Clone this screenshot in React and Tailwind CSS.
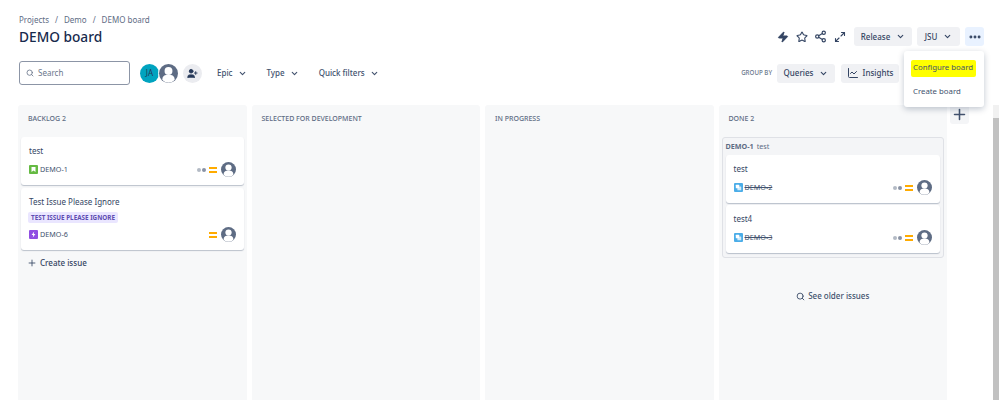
import { Search, ChevronDown, Zap, Star, Share2, Maximize2, Ellipsis, UserPlus, ChartLine, Plus } from 'lucide-react';

const UserAvatar = ({ size = 16 }) => (
  <svg width={size} height={size} viewBox="0 0 24 24" className="shrink-0">
    <circle cx="12" cy="12" r="12" fill="#5e6c84" />
    <circle cx="12" cy="8.8" r="5" fill="#fff" />
    <path d="M4.2 19.5c0-3.6 2.4-5.6 5-5.6h5.6c2.6 0 5 2 5 5.6v0.8a10.5 10.5 0 0 1-15.6 0z" fill="#fff" />
  </svg>
);

const Priority = () => (
  <div className="flex flex-col gap-[2px] w-[8px] shrink-0">
    <div className="h-[2px] bg-[#ffab00]" />
    <div className="h-[2px] bg-[#ffab00]" />
  </div>
);

const Dots = () => (
  <div className="flex gap-[1px]">
    <div className="w-[4px] h-[4px] rounded-full bg-[#b3bac5]" />
    <div className="w-[4px] h-[4px] rounded-full bg-[#8993a4]" />
  </div>
);

const FilterButton = ({ label, className }) => (
  <div className={`flex items-center gap-[5px] text-[8px] font-medium text-[#42526e] ${className}`}>
    {label}
    <ChevronDown size={9} strokeWidth={3} />
  </div>
);

const GrayButton = ({ label, className }) => (
  <div className={`h-[19px] flex items-center justify-center gap-[6px] rounded-[3px] bg-[#f0f1f4] text-[8px] font-medium text-[#344563] ${className}`}>
    {label}
    <ChevronDown size={9} strokeWidth={3} />
  </div>
);

const IssueCard = ({ title, tag, issueKey, icon, dots, done }) => (
  <div className="bg-white rounded-[3px] shadow-[0_1px_1px_rgba(9,30,66,0.25)] px-[8px] pt-[7px] pb-[8px]">
    <div className="text-[8px] leading-[14px] text-[#344563]">{title}</div>
    {tag && (
      <div className="mt-[3px] w-fit h-[11px] flex items-center px-[3px] -ml-[1px] rounded-[2px] bg-[#eae6ff] text-[6.3px] font-bold text-[#5e4db2]">
        {tag}
      </div>
    )}
    <div className="flex items-center mt-[4px]">
      {icon}
      <span className={`ml-[2px] text-[7.2px] text-[#42526e] ${done ? 'line-through' : ''}`}>{issueKey}</span>
      <div className="ml-auto flex items-center gap-[2px]">
        {dots && <div className="mr-[1px]"><Dots /></div>}
        <Priority />
        <div className="ml-[2px]">
          <UserAvatar size={15} />
        </div>
      </div>
    </div>
  </div>
);

const StoryIcon = () => (
  <svg width="9" height="9" viewBox="0 0 9 9" className="shrink-0">
    <rect width="9" height="9" rx="1" fill="#65ba43" />
    <path d="M2.5 2h4v5L4.5 5.6 2.5 7z" fill="#fff" />
  </svg>
);

const EpicIcon = () => (
  <svg width="9" height="9" viewBox="0 0 9 9" className="shrink-0">
    <rect width="9" height="9" rx="1" fill="#904ee2" />
    <path d="M5.2 1.5 2.6 5h1.6l-.4 2.5L6.4 4H4.8z" fill="#fff" />
  </svg>
);

const TaskIcon = () => (
  <svg width="9" height="9" viewBox="0 0 9 9" className="shrink-0">
    <rect width="9" height="9" rx="1" fill="#4bade8" />
    <rect x="1.8" y="1.8" width="3.4" height="3.4" rx="0.5" fill="#fff" />
    <rect x="3.4" y="3.4" width="3.8" height="3.8" rx="0.5" fill="#fff" fillOpacity="0.75" />
  </svg>
);

const Column = ({ title, children }) => (
  <div className="flex-1 min-w-0 bg-[#f7f8f9] rounded-t-[3px] px-[3px]">
    <div className="h-[28px] flex items-center px-[7px] mb-[4px] text-[7px] font-medium text-[#5e6c84] uppercase">
      {title}
    </div>
    {children}
  </div>
);

const App = () => {
  return (
    <div className="relative w-[999px] h-[400px] overflow-hidden bg-white font-['Noto_Sans',sans-serif]">
      {/* HEADER */}
      <div className="pl-[19px] pr-[15px] pt-[13px] flex justify-between">
        <div>
          <div className="flex gap-[6px] text-[8px] leading-[13px] text-[#5e6c84]">
            <span>Projects</span>
            <span>/</span>
            <span>Demo</span>
            <span>/</span>
            <span>DEMO board</span>
          </div>
          <h1 className="mt-[1px] text-[13.7px] leading-[20px] font-medium text-[#172b4d]">DEMO board</h1>
        </div>
        <div className="flex items-center h-[19px] mt-[14px] text-[#344563]">
          <Zap size={12} fill="#344563" />
          <Star size={12} strokeWidth={2.2} className="ml-[7px]" />
          <Share2 size={13} strokeWidth={2.2} className="ml-[6px]" />
          <Maximize2 size={12} strokeWidth={2.2} className="ml-[7px]" />
          <GrayButton label="Release" className="ml-[8px] w-[58px]" />
          <GrayButton label="JSU" className="ml-[5px] w-[43px]" />
          <div className="ml-[5px] w-[19px] h-[19px] rounded-[3px] bg-[#e9f2ff] flex items-center justify-center">
            <Ellipsis size={14} strokeWidth={3} />
          </div>
        </div>
      </div>

      {/* FILTERS */}
      <div className="mt-[14px] pl-[19px] flex items-center h-[24px]">
        <div className="w-[111px] h-[24px] rounded-[3px] border border-[#8c95a6] flex items-center pl-[6px] gap-[4px] text-[8px] text-[#6b778c]">
          <Search size={8} strokeWidth={2.5} />
          Search
        </div>
        <div className="ml-[10px] w-[19px] h-[19px] rounded-full bg-[#00a3bf] flex items-center justify-center text-[8px] text-[#253858]">
          JA
        </div>
        <div className="rounded-full border-[1.5px] border-white -ml-[1px]">
          <UserAvatar size={19} />
        </div>
        <div className="ml-[4px] w-[19px] h-[19px] rounded-full bg-[#ebecf0] flex items-center justify-center">
          <UserPlus size={11} fill="#253858" stroke="#253858" />
        </div>
        <FilterButton label="Epic" className="ml-[15px]" />
        <FilterButton label="Type" className="ml-[20px]" />
        <FilterButton label="Quick filters" className="ml-[20px]" />
        <div className="ml-auto mr-[100px] flex items-center">
          <span className="text-[6.2px] font-medium text-[#6b778c] mr-[5px]">GROUP BY</span>
          <GrayButton label="Queries" className="w-[58px]" />
          <div className="ml-[6px] w-[58px] h-[19px] rounded-[3px] bg-[#f0f1f4] flex items-center justify-center gap-[4px] text-[8px] font-medium text-[#344563]">
            <ChartLine size={12} />
            Insights
          </div>
        </div>
      </div>

      {/* BOARD */}
      <div className="mt-[20px] pl-[18px] flex h-[295px]">
        <div className="w-[929px] flex gap-[5px]">
          <Column title="Backlog 2">
            <div className="flex flex-col gap-[3px]">
              <IssueCard title="test" issueKey="DEMO-1" icon={<StoryIcon />} dots />
              <IssueCard title="Test Issue Please Ignore" tag="TEST ISSUE PLEASE IGNORE" issueKey="DEMO-6" icon={<EpicIcon />} />
            </div>
            <div className="mt-[7px] pl-[6px] flex items-center gap-[3px] text-[8px] font-medium text-[#344563]">
              <Plus size={10} />
              Create issue
            </div>
          </Column>
          <Column title="Selected for development" />
          <Column title="In progress" />
          <Column title="Done 2">
            <div className="rounded-[3px] border border-[#dfe1e6] bg-[#f4f5f7] px-[3px] pb-[4px]">
              <div className="h-[17px] flex items-center gap-[3px] text-[7.2px] text-[#5e6c84]">
                <span className="font-bold">DEMO-1</span>
                <span>test</span>
              </div>
              <div className="flex flex-col gap-[2px]">
                <IssueCard title="test" issueKey="DEMO-2" icon={<TaskIcon />} dots done />
                <IssueCard title="test4" issueKey="DEMO-3" icon={<TaskIcon />} dots done />
              </div>
            </div>
            <div className="mt-[32px] flex items-center justify-center gap-[3px] text-[8px] font-medium text-[#42526e]">
              <Search size={9} strokeWidth={2.5} />
              See older issues
            </div>
          </Column>
        </div>
        <div className="ml-[3px] w-[19px] h-[19px] rounded-[3px] bg-[#f4f5f7] flex items-center justify-center">
          <Plus size={17} strokeWidth={2.2} className="text-[#42526e]" />
        </div>
        <div className="ml-auto w-[6px] bg-[#f1f1f1] flex flex-col">
          <div className="h-[13px]" />
          <div className="flex-1 bg-[#c1c1c1]" />
        </div>
      </div>

      {/* MENU */}
      <div className="absolute left-[904px] top-[51px] w-[80px] h-[56px] bg-white rounded-[3px] shadow-[0_2px_6px_rgba(9,30,66,0.25)] pt-[8px]">
        <div className="absolute left-[7px] top-[9px] w-[65px] h-[17px] bg-[#ffff00] rounded-[2px]" />
        <div className="relative pl-[9px] whitespace-nowrap text-[7.8px] leading-[16px] text-[#42526e]">Configure board</div>
        <div className="relative mt-[8px] pl-[9px] whitespace-nowrap text-[7.8px] leading-[16px] text-[#42526e]">Create board</div>
      </div>
    </div>
  );
};

export default App;
